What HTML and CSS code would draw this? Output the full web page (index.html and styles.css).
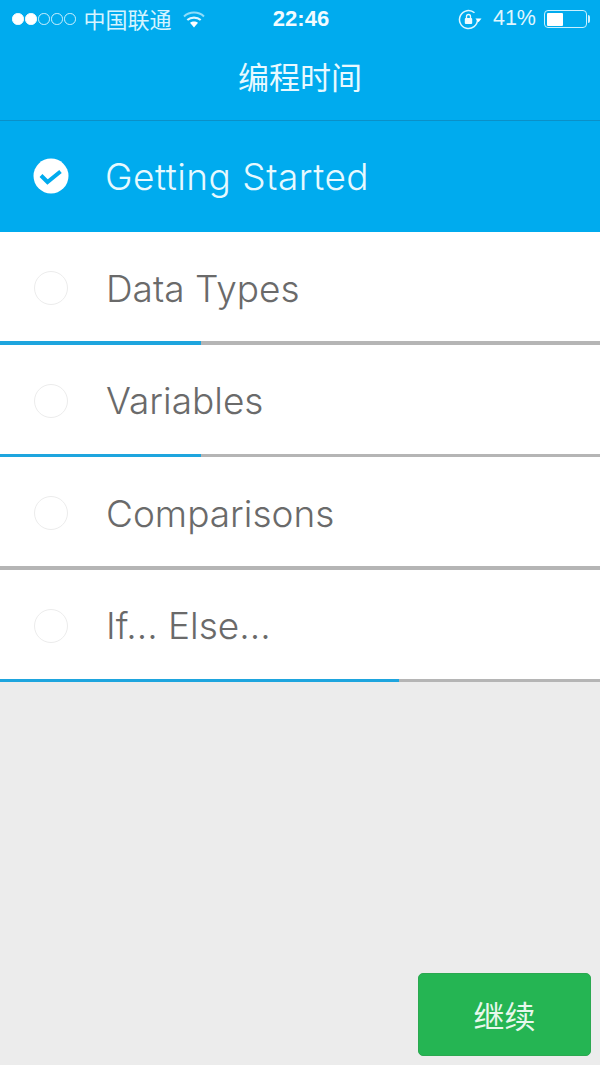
FILE: index.html
```html
<!DOCTYPE html>
<html lang="zh">
<head>
<meta charset="utf-8">
<title>编程时间</title>
<link rel="stylesheet" href="styles.css">
</head>
<body>
<div class="screen">
  <header class="top">
    <div class="status">
      <div class="status-left">
        <span class="signal"><i class="dot on"></i><i class="dot on"></i><i class="dot"></i><i class="dot"></i><i class="dot"></i></span>
        <span class="carrier">中国联通</span>
        <svg class="wifi" width="22" height="17" viewBox="0 0 22 17"><path d="M1 5.500C6.500.3 15.500.3 21 5.500" fill="none" stroke="#8fdcf9" stroke-width="2"/><path d="M4.300 9C8 5.800 14 5.800 17.700 9" fill="none" stroke="#e0f6ff" stroke-width="2.200"/><path d="M7 11.800C9.300 10 12.700 10 15 11.800L11 16.500Z" fill="#fff"/></svg>
      </div>
      <div class="time">22:46</div>
      <div class="status-right">
        <svg class="lock" width="24" height="21" viewBox="0 0 24 21"><path d="M19.500 10.500A9 9 0 1 1 16.500 3.800" fill="none" stroke="#dff6ff" stroke-width="1.500"/><path d="M17.500 9.500h6l-3 3.800z" fill="#fff"/><rect x="6.800" y="9" width="7.400" height="6" rx="1" fill="#eefaff"/><path d="M8.500 9V7.500a2 2 0 0 1 4 0V9" fill="none" stroke="#eefaff" stroke-width="1.300"/></svg>
        <span class="percent">41%</span>
        <span class="battery"><span class="battery-fill"></span></span>
        <span class="battery-tip"></span>
      </div>
    </div>
    <h1 class="title">编程时间</h1>
  </header>
  <ul class="list">
    <li class="row selected">
      <svg class="check" width="36" height="36" viewBox="0 0 36 36"><circle cx="18" cy="18" r="17.500" fill="#fff"/><path d="M8 17.500l6.500 6.500L27.500 13.500" fill="none" stroke="#00abee" stroke-width="4"/></svg>
      <span class="label">Getting Started</span>
    </li>
    <li class="row"><span class="radio"></span><span class="label">Data Types</span><div class="bar"><div class="fill" style="width:33.5%"></div></div></li>
    <li class="row"><span class="radio"></span><span class="label">Variables</span><div class="bar"><div class="fill" style="width:33.5%"></div></div></li>
    <li class="row"><span class="radio"></span><span class="label">Comparisons</span><div class="bar"><div class="fill" style="width:0"></div></div></li>
    <li class="row"><span class="radio"></span><span class="label">If... Else...</span><div class="bar"><div class="fill" style="width:66.5%"></div></div></li>
  </ul>
  <div class="footer"><button class="continue">继续</button></div>
</div>
</body>
</html>
```
FILE: styles.css
```css
* { box-sizing: border-box; }
html, body { margin: 0; padding: 0; }
body { font-family: Inter, "Noto Sans CJK SC", sans-serif; background: #ececec; }
.screen { width: 600px; height: 1065px; display: flex; flex-direction: column; overflow: hidden; }
.top { height: 121px; background: #00abee; border-bottom: 1px solid #0a90c8; color: #fff; flex: none; }
.status { height: 38px; display: grid; grid-template-columns: 1fr auto 1fr; align-items: center; padding: 0 10px 0 12px; }
.status-left, .status-right { display: flex; align-items: center; }
.status-right { justify-content: flex-end; }
.signal { display: flex; gap: 1.500px; margin-right: 8px; }
.dot { width: 11.500px; height: 11.500px; border-radius: 50%; border: 1.200px solid #cdf1ff; }
.dot.on { background: #fff; border-color: #fff; }
.carrier { font: 400 22px/1 "Noto Sans CJK SC", sans-serif; color: #d5f4ff; margin-bottom: 3px; }
.wifi { margin-left: 11px; }
.time { font: 700 22px/1 "Liberation Sans", sans-serif; color: #f2fbff; }
.lock { margin-right: 11px; }
.percent { font: 400 21.500px/1 "Liberation Sans", sans-serif; color: #e0f7ff; margin-right: 8px; }
.battery { width: 43px; height: 18px; border: 1.500px solid #c9f0ff; border-radius: 4px; padding: 1.500px; display: block; }
.battery-fill { display: block; width: 16px; height: 100%; background: #fff; border-radius: 1px; }
.battery-tip { width: 2.500px; height: 8px; background: #c9f0ff; border-radius: 0 2px 2px 0; margin-left: .5px; }
.title { margin: 0; font: 400 31px/1 "Noto Sans CJK SC", sans-serif; text-align: center; padding-top: 22px; color: #e8f9ff; }
.list { list-style: none; margin: 0; padding: 0; flex: none; }
.row { height: 112.500px; background: #fff; position: relative; display: flex; align-items: center; padding-left: 34px; }
.row.selected { height: 111px; background: #00abee; padding-left: 33px; padding-bottom: 1px; }
.label { font-family: Inter, sans-serif; font-weight: 300; font-size: 37px; color: #6a6a6a; margin-left: 38px; }
.selected .label { color: #e6f9ff; margin-left: 36px; letter-spacing: .5px; }
.check { flex: none; }
.radio { width: 34px; height: 34px; border-radius: 50%; border: 1px solid #ececec; flex: none; }
.bar { position: absolute; left: 0; right: 0; bottom: 0; height: 3.500px; background: #b5b5b5; }
.fill { height: 100%; background: #1ea5de; }
.footer { flex: 1; display: flex; justify-content: flex-end; align-items: flex-end; padding: 0 9px 9px 0; }
.continue { width: 173px; height: 83px; border: 1px solid #2ba850; border-radius: 5px; background: #25b553; color: #e8f8ec; font: 400 31px/1 "Noto Sans CJK SC", sans-serif; padding: 0; }
```
